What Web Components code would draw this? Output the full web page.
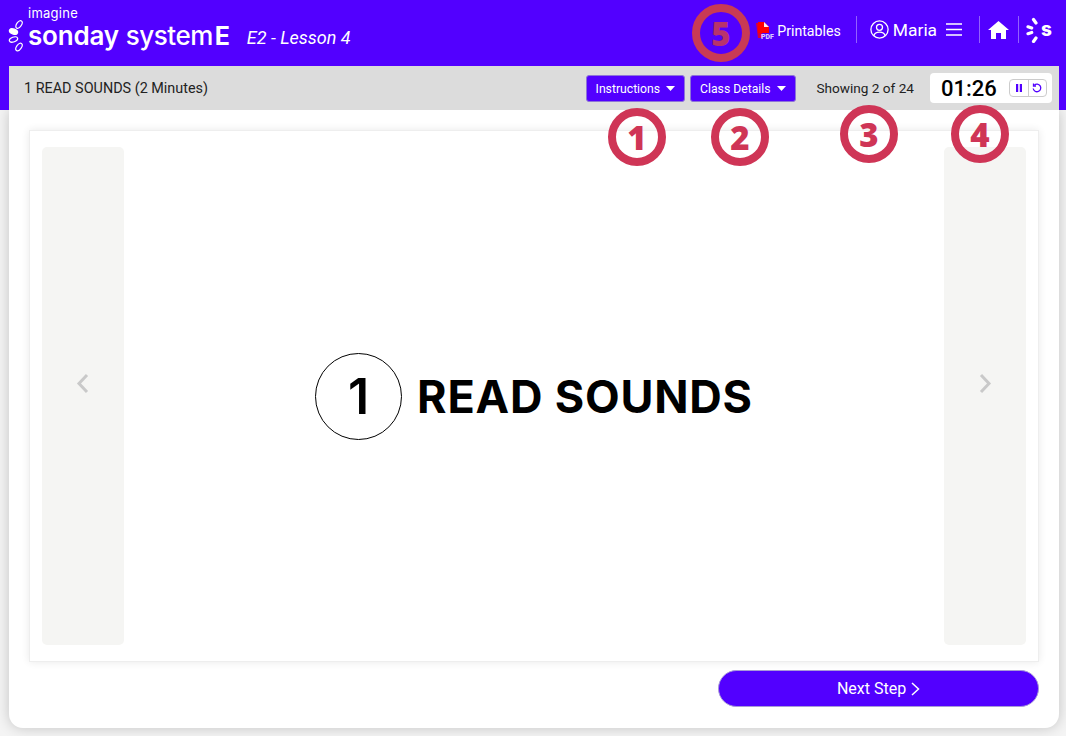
<!DOCTYPE html>
<html lang="en">
<head>
<meta charset="utf-8">
<title>Sonday System E</title>
<style>
    html,body{margin:0;height:100%;}
    body{
        position:relative;
        width:1066px;
        height:736px;
        overflow:hidden;
        background:#f4f4f4;
        font-family:Roboto,"Liberation Sans",sans-serif;
    }
</style>
</head>
<body>
<lesson-header title-text="E2 - Lesson 4"></lesson-header>
<lesson-stage></lesson-stage>
<step-mark n="1" style="left:608px;top:108px"></step-mark>
<step-mark n="2" style="left:711px;top:108px"></step-mark>
<step-mark n="3" style="left:840px;top:105px"></step-mark>
<step-mark n="4" style="left:951px;top:105px"></step-mark>
<step-mark n="5" dim style="left:692px;top:4px"></step-mark>

<script>
const caret=`<svg width="9" height="5" viewBox="0 0 9 5"><path d="M0 0h9L4.500 5z" fill="#fff"/></svg>`;

class SondayLogo extends HTMLElement {
    constructor() {
        super();
        this.attachShadow({mode: 'open'});
        this.shadowRoot.innerHTML=`
        <style>
            :host{display:flex;align-items:flex-end;color:#fff;font-family:Inter,sans-serif;height:66px;box-sizing:border-box;padding:0 0 17px 8px;}
            svg{display:block;margin-right:4px;margin-bottom:-3px;}
            .imagine{font-size:13px;line-height:13px;letter-spacing:.25px;margin-bottom:3px;font-weight:400;}
            .name{font-size:26px;line-height:25px;font-weight:600;letter-spacing:-.2px;white-space:nowrap;}
            .name b{font-weight:700;font-size:25px;margin-left:2px;}
            .name i{font-style:normal;font-weight:500;margin-left:7px;letter-spacing:-.5px;}
        </style>
        <svg width="16" height="32" viewBox="0 0 16 32" fill="none" stroke="#fff" stroke-width="1.200">
            <ellipse cx="11" cy="4.500" rx="4.300" ry="2.400" transform="rotate(-55 11 4.500)"/>
            <ellipse cx="5.500" cy="11.500" rx="4.200" ry="2.500" transform="rotate(20 5.500 11.500)" fill="#fff"/>
            <ellipse cx="5.500" cy="19.500" rx="4.300" ry="2.400" transform="rotate(-20 5.500 19.500)"/>
            <ellipse cx="11" cy="27" rx="4.300" ry="2.400" transform="rotate(-55 11 27)"/>
        </svg>
        <div>
            <div class="imagine">imagine</div>
            <div class="name">sonday<i>system</i><b>E</b></div>
        </div>
        `;
    }
}

class HeaderTools extends HTMLElement {
    constructor() {
        super();
        this.attachShadow({mode: 'open'});
        this.shadowRoot.innerHTML=`
        <style>
            :host{display:flex;align-items:center;color:#fff;height:27px;margin:0 14px 7px 0;}
            .sep{width:1px;height:27px;background:rgba(255,255,255,.38);}
            .pdf{display:block;margin:2px 1px 0 0;}
            .printables{font-size:14.200px;margin:3px 15px 0 0;}
            .user{display:block;margin:0 4px 0 13px;}
            .maria{font-size:17.400px;margin-right:9px;}
            .menu{display:block;margin-right:17px;}
            .home{display:block;margin:0 9px 0 8px;}
            .mark{display:block;margin-left:7px;}
            .s{font:800 19px/19px Inter,sans-serif;margin-left:1px;}
        </style>
        <svg class="pdf" width="20" height="17" viewBox="0 0 20 17">
            <path d="M0 1h6v15H2z" fill="#d8003a"/>
            <path d="M2 0h6l5 5v6H2z" fill="#f00"/>
            <path d="M8 0l5 5H8z" fill="#ffe6ee"/>
            <text x="5" y="16.500" font-family="Roboto" font-size="7" font-weight="900" fill="#d9c8ff">PDF</text>
        </svg>
        <span class="printables">Printables</span>
        <span class="sep"></span>
        <svg class="user" width="19" height="19" viewBox="0 0 19 19" fill="none" stroke="#fff" stroke-width="1.300">
            <circle cx="9.500" cy="9.500" r="8.600"/>
            <circle cx="9.500" cy="7.300" r="3"/>
            <path d="M3.800 15.800c.8-2.700 3-3.700 5.700-3.700s4.900 1 5.700 3.700"/>
        </svg>
        <span class="maria">Maria</span>
        <svg class="menu" width="16" height="13" viewBox="0 0 16 13" stroke="#fff" stroke-width="1.500">
            <path d="M0 1h16M0 6.500h16M0 12h16"/>
        </svg>
        <span class="sep"></span>
        <svg class="home" width="21" height="18" viewBox="0 0 21 18">
            <path d="M10.500 0L21 9h-3v9h-5v-6H8v6H3V9H0z" fill="#fff"/>
        </svg>
        <span class="sep"></span>
        <svg class="mark" width="14" height="26" viewBox="0 0 14 26" stroke="#fff" stroke-width="3.200" stroke-linecap="round">
            <path d="M7.500 2.500l2.500 3.500M2 9.800l3.700 1.200M2 16.700l3.700-1.200M7.500 24.500l2.500-3.500"/>
        </svg>
        <span class="s">s</span>
        `;
    }
}

class DropButton extends HTMLElement {
    constructor() {
        super();
        this.attachShadow({mode: 'open'});
        this.shadowRoot.innerHTML=`
        <style>
            :host{display:inline-flex;align-items:center;gap:6px;box-sizing:border-box;height:27px;margin-top:1px;padding:0 9px;background:#5200ff;border:1px solid #8e74d8;border-radius:3px;color:#fff;font-size:12.200px;}
        </style>
        <slot></slot>${caret}
        `;
    }
}

class LessonTimer extends HTMLElement {
    constructor() {
        super();
        this.attachShadow({mode: 'open'});
        this.shadowRoot.innerHTML=`
        <style>
            :host{display:flex;align-items:center;box-sizing:border-box;width:122px;height:30px;padding:0 5px 0 11px;background:#fff;border-radius:4px;color:#000;}
            .time{font-size:22px;font-weight:500;width:68px;}
            .ctl{display:flex;width:38px;height:18px;box-sizing:border-box;border:1px solid #ccc;border-radius:4px;}
            .ctl span{flex:1;display:flex;align-items:center;justify-content:center;}
            .ctl span+span{border-left:1px solid #ccc;}
        </style>
        <span class="time"><slot></slot></span>
        <div class="ctl">
            <span><svg width="6" height="8" viewBox="0 0 6 8" fill="#5200ff"><path d="M0 0h2.200v8H0zM3.800 0H6v8H3.800z"/></svg></span>
            <span><svg width="10" height="10" viewBox="0 0 10 10" fill="none" stroke="#5200ff" stroke-width="1.300"><path d="M2.300 2.200A3.800 3.800 0 1 1 1.200 5.500"/><path d="M1.500.5v2.500H4" /></svg></span>
        </div>
        `;
    }
}

class LessonHeader extends HTMLElement {
    constructor() {
        super();
        this.attachShadow({mode: 'open'});
        const title=this.getAttribute('title-text')||'';
        this.shadowRoot.innerHTML=`
        <style>
            :host{display:block;position:relative;z-index:1;background:#5200ff;padding:0 7px 0 9px;color:#fff;}
            .top{display:flex;align-items:center;height:66px;margin-left:-9px;margin-right:-7px;}
            .title{font-size:18px;font-style:italic;margin:8px 0 0 17px;}
            .right{margin-left:auto;}
            .bar{display:flex;align-items:center;height:44px;background:#dcdcdc;color:#222;font-size:14px;padding:0 7px 0 15px;}
            .name{flex:1;font-size:14.400px;}
            .btns{display:flex;gap:5px;margin-right:21px;}
            .count{margin-right:16px;font-size:13.600px;}
        </style>
        <div class="top">
            <sonday-logo></sonday-logo>
            <span class="title">${title}</span>
            <header-tools class="right"></header-tools>
        </div>
        <div class="bar">
            <span class="name">1 READ SOUNDS (2 Minutes)</span>
            <div class="btns">
                <drop-button>Instructions</drop-button>
                <drop-button>Class Details</drop-button>
            </div>
            <span class="count">Showing 2 of 24</span>
            <lesson-timer>01:26</lesson-timer>
        </div>
        `;
    }
}

class SlidePanel extends HTMLElement {
    constructor() {
        super();
        this.attachShadow({mode: 'open'});
        const points=this.getAttribute('dir')==='next' ? 'M3 2l8 8.500-8 8.500' : 'M11 2l-8 8.500 8 8.500';
        this.shadowRoot.innerHTML=`
        <style>
            :host{display:flex;align-items:center;justify-content:center;box-sizing:border-box;width:82px;background:#f5f5f3;border-radius:5px;padding-bottom:26px;}
        </style>
        <svg width="14" height="21" viewBox="0 0 14 21" fill="none" stroke="#c9c9c9" stroke-width="3"><path d="${points}"/></svg>
        `;
    }
}

class LessonStage extends HTMLElement {
    constructor() {
        super();
        this.attachShadow({mode: 'open'});
        this.shadowRoot.innerHTML=`
        <style>
            :host{display:block;box-sizing:border-box;width:1050px;height:618px;margin-left:9px;padding:20px;background:#fff;border-radius:0 0 14px 14px;box-shadow:0 0 14px rgba(0,0,0,.2);}
            .slide{display:flex;justify-content:space-between;box-sizing:border-box;height:532px;padding:16px 12px;border:1px solid #eeeeee;box-shadow:0 0 8px rgba(0,0,0,.09);}
            .center{flex:1;display:flex;align-items:center;justify-content:center;gap:15px;color:#000;font-family:Inter,sans-serif;}
            .num{display:flex;align-items:center;justify-content:center;box-sizing:border-box;width:87px;height:87px;border:1px solid #000;border-radius:50%;font-size:50px;font-weight:600;}
            .label{font-size:45px;font-weight:700;letter-spacing:.8px;white-space:nowrap;}
            .foot{display:flex;justify-content:flex-end;margin-top:8px;}
            .next{display:flex;align-items:center;justify-content:center;gap:5px;box-sizing:border-box;width:321px;height:37px;background:#5200ff;border:1px solid #a89ad8;border-radius:19px;color:#fff;font-size:16px;}
        </style>
        <div class="slide">
            <slide-panel dir="prev"></slide-panel>
            <div class="center">
                <span class="num">1</span>
                <span class="label">READ SOUNDS</span>
            </div>
            <slide-panel dir="next"></slide-panel>
        </div>
        <div class="foot">
            <div class="next">Next Step
                <svg width="9" height="14" viewBox="0 0 9 14" fill="none" stroke="#fff" stroke-width="1.500"><path d="M1 1l6.500 6L1 13"/></svg>
            </div>
        </div>
        `;
    }
}

class StepMark extends HTMLElement {
    constructor() {
        super();
        this.attachShadow({mode: 'open'});
        const dim=this.hasAttribute('dim');
        this.shadowRoot.innerHTML=`
        <style>
            :host{position:absolute;z-index:2;display:flex;align-items:center;justify-content:center;box-sizing:border-box;width:58px;height:58px;border:8px solid ${dim?'#c93a55':'#cf3556'};border-radius:50%;color:${dim?'#b8336b':'#cf3556'};font:800 33px/1 "Open Sans",sans-serif;}
        </style>
        ${this.getAttribute('n')}
        `;
    }
}

customElements.define('sonday-logo', SondayLogo);
customElements.define('header-tools', HeaderTools);
customElements.define('drop-button', DropButton);
customElements.define('lesson-timer', LessonTimer);
customElements.define('slide-panel', SlidePanel);
customElements.define('step-mark', StepMark);
customElements.define('lesson-header', LessonHeader);
customElements.define('lesson-stage', LessonStage);
</script>
</body>
</html>
